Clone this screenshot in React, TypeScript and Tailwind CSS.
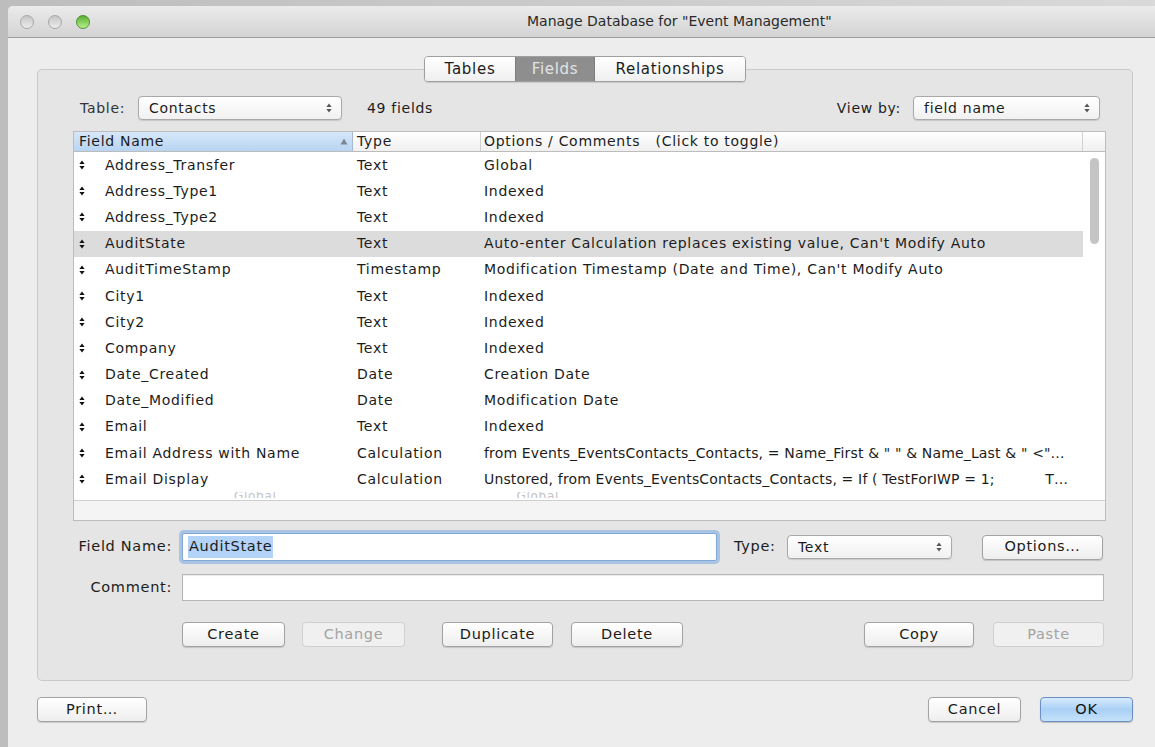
import React from "react"

type Field = { name: string; type: string; options: string; tight?: boolean }

const fields: Field[] = [
  { name: "Address_Transfer", type: "Text", options: "Global" },
  { name: "Address_Type1", type: "Text", options: "Indexed" },
  { name: "Address_Type2", type: "Text", options: "Indexed" },
  { name: "AuditState", type: "Text", options: "Auto-enter Calculation replaces existing value, Can't Modify Auto" },
  { name: "AuditTimeStamp", type: "Timestamp", options: "Modification Timestamp (Date and Time), Can't Modify Auto" },
  { name: "City1", type: "Text", options: "Indexed" },
  { name: "City2", type: "Text", options: "Indexed" },
  { name: "Company", type: "Text", options: "Indexed" },
  { name: "Date_Created", type: "Date", options: "Creation Date" },
  { name: "Date_Modified", type: "Date", options: "Modification Date" },
  { name: "Email", type: "Text", options: "Indexed" },
  {
    name: "Email Address with Name",
    type: "Calculation",
    options: "from Events_EventsContacts_Contacts, = Name_First & \" \" & Name_Last & \" <\"…",
    tight: true,
  },
  {
    name: "Email Display",
    type: "Calculation",
    options: "Unstored, from Events_EventsContacts_Contacts, = If ( TestForIWP = 1;           T…",
    tight: true,
  },
]

const SELECTED = "AuditState"

// little up/down arrows used as the drag handle and in popup menus
function UpDown({ className = "" }: { className?: string }) {
  return (
    <svg width="6" height="10" viewBox="0 0 6 10" className={className}>
      <path d="M3 0.5 L5.6 4 H0.4 Z" fill="currentColor" />
      <path d="M3 9.5 L5.6 6 H0.4 Z" fill="currentColor" />
    </svg>
  )
}

function PopUp({ value, width }: { value: string; width: string }) {
  return (
    <div
      className={`${width} h-[24px] shrink-0 flex items-center justify-between pl-[10px] pr-[9px] rounded-[4px] border border-[#a9a9a9] bg-gradient-to-b from-[#ffffff] to-[#f1f1f1] shadow-[0_1px_1px_rgba(0,0,0,0.12)] text-[14px] text-[#1c1c1c]`}
    >
      <span>{value}</span>
      <UpDown className="text-[#555]" />
    </div>
  )
}

function Button({
  label,
  width,
  disabled = false,
  primary = false,
}: {
  label: string
  width: string
  disabled?: boolean
  primary?: boolean
}) {
  let tone =
    "border-[#a3a3a3] bg-gradient-to-b from-[#ffffff] to-[#eeeeee] text-[#1b1b1b] shadow-[0_1px_1px_rgba(0,0,0,0.15)]"
  if (disabled) tone = "border-[#cfcfcf] bg-[#f0f0f0] text-[#a3a3a3]"
  if (primary)
    tone =
      "border-[#6b8fc4] bg-gradient-to-b from-[#d7ebfd] via-[#a9d0f5] to-[#c6e2fb] text-[#111] shadow-[0_1px_1px_rgba(0,0,0,0.2)]"
  return (
    <div
      className={`${width} h-[25px] shrink-0 flex items-center justify-center rounded-[4px] border text-[14.5px] ${tone}`}
    >
      {label}
    </div>
  )
}

export default function App() {
  return (
    <div
      className="w-[1155px] h-[747px] overflow-hidden flex bg-gradient-to-r from-[#bdbdbd] to-[#d9d9d9] text-[#1c1c1c] tracking-[0.7px]"
      style={{ fontFamily: '"DejaVu Sans", "Liberation Sans", sans-serif' }}
    >
      <div className="ml-[8px] mt-[6px] w-[1160px] shrink-0 flex flex-col bg-[#ededed] rounded-tl-[5px]">
        {/* title bar */}
        <div className="h-[32px] shrink-0 flex items-center rounded-tl-[5px] bg-gradient-to-b from-[#ebebeb] to-[#d3d3d3] border-b border-[#9c9c9c]">
          <div className="flex gap-[14px] pl-[12px]">
            <span className="w-[14px] h-[14px] rounded-full bg-gradient-to-b from-[#c5c5c5] to-[#ececec] border border-[#a7a7a7]" />
            <span className="w-[14px] h-[14px] rounded-full bg-gradient-to-b from-[#c5c5c5] to-[#ececec] border border-[#a7a7a7]" />
            <span className="w-[14px] h-[14px] rounded-full bg-gradient-to-b from-[#54b030] to-[#b9f08a] border border-[#4f8e34]" />
          </div>
          <div className="ml-[437px] text-[14px] tracking-normal text-[#2a2a2a]">Manage Database for "Event Management"</div>
        </div>

        {/* body */}
        <div className="flex flex-col pl-[29px] w-[1125px]">
          {/* group box */}
          <div className="mt-[31px] h-[612px] flex flex-col rounded-[5px] border border-[#c9c9c9] bg-[#e5e5e5]">
            {/* tabs */}
            <div className="-mt-[14px] flex justify-center">
              <div className="flex h-[26px] rounded-[4px] border border-[#9f9f9f] overflow-hidden shadow-[0_1px_1px_rgba(0,0,0,0.12)] text-[15px]">
                <div className="w-[90px] flex items-center justify-center bg-gradient-to-b from-[#ffffff] to-[#efefef]">Tables</div>
                <div className="w-[80px] flex items-center justify-center bg-[#8e8e8e] text-[#e3e3e3] border-x border-[#7d7d7d]">Fields</div>
                <div className="w-[150px] flex items-center justify-center bg-gradient-to-b from-[#ffffff] to-[#efefef]">Relationships</div>
              </div>
            </div>

            {/* table picker row */}
            <div className="mt-[14px] flex items-center pl-[42px] pr-[32px] text-[14px]">
              <span className="text-[#333] w-[58px]">Table:</span>
              <PopUp value="Contacts" width="w-[204px]" />
              <span className="ml-[25px]">49 fields</span>
              <span className="ml-auto mr-[12px]">View by:</span>
              <PopUp value="field name" width="w-[187px]" />
            </div>

            {/* field list */}
            <div className="mt-[11px] ml-[35px] w-[1033px] h-[390px] flex flex-col border border-[#bdbdbd] bg-white text-[14px]">
              <div className="h-[20px] shrink-0 flex border-b border-[#bcbcbc] bg-gradient-to-b from-[#ffffff] to-[#f0f0f0]">
                <div className="w-[279px] shrink-0 flex items-center justify-between pl-[5px] pr-[4px] bg-gradient-to-b from-[#d7e8f9] to-[#b7d4f1] border-r border-[#a9b9cb]">
                  <span>Field Name</span>
                  <svg width="8" height="7" viewBox="0 0 8 7">
                    <path d="M4 0.5 L7.5 6.5 H0.5 Z" fill="#7c8896" />
                  </svg>
                </div>
                <div className="w-[128px] shrink-0 flex items-center pl-[4px] border-r border-[#d0d0d0]">Type</div>
                <div className="w-[602px] shrink-0 flex items-center pl-[3px] border-r border-[#d0d0d0]">
                  Options / Comments&nbsp;&nbsp; (Click to toggle)
                </div>
              </div>
              <div className="flex-1 flex min-h-0">
                <div className="flex-1 min-w-0 flex flex-col overflow-hidden">
                  {fields.map((f) => (
                    <div
                      key={f.name}
                      className={`h-[26.2px] shrink-0 flex items-center ${f.name === SELECTED ? "bg-[#dcdcdc]" : ""}`}
                    >
                      <div className="w-[279px] shrink-0 flex items-center pl-[5px]">
                        <UpDown className="text-[#111]" />
                        <span className="ml-[20px]">{f.name}</span>
                      </div>
                      <div className="w-[128px] shrink-0 pl-[4px]">{f.type}</div>
                      <div
                        className={`flex-1 min-w-0 overflow-hidden pl-[3px] whitespace-pre ${f.tight ? "tracking-[0.15px]" : ""}`}
                      >
                        {f.options}
                      </div>
                    </div>
                  ))}
                  <div className="h-[6px] shrink-0 flex items-start overflow-hidden text-[#c4c4c4] text-[12px] leading-[8px]">
                    <span className="ml-[160px]">Global</span>
                    <span className="ml-[240px]">Global</span>
                  </div>
                </div>
                {/* scroll bar */}
                <div className="w-[22px] shrink-0 pt-[6px] flex justify-center">
                  <div className="w-[9px] h-[86px] rounded-full bg-[#c4c4c4]" />
                </div>
              </div>
              <div className="h-[20px] shrink-0 border-t border-[#cfcfcf] bg-[#f4f4f4]" />
            </div>

            {/* field name / type */}
            <div className="mt-[12px] flex items-center text-[14.5px]">
              <span className="w-[144px] shrink-0 text-right pr-[10px]">Field Name:</span>
              <div className="w-[535px] shrink-0 h-[28px] flex items-center pl-[5px] bg-white border border-[#7fa9d8] shadow-[0_0_0_3px_rgba(120,170,225,0.55)] rounded-[2px]">
                <span className="bg-[#b3d3f8] px-[1px]">AuditState</span>
              </div>
              <span className="ml-[17px] w-[53px] shrink-0">Type:</span>
              <PopUp value="Text" width="w-[165px]" />
              <div className="ml-[30px]">
                <Button label="Options…" width="w-[121px]" />
              </div>
            </div>

            {/* comment */}
            <div className="mt-[13px] flex items-center text-[14.5px]">
              <span className="w-[144px] shrink-0 text-right pr-[10px]">Comment:</span>
              <div className="w-[922px] h-[27px] bg-white border border-[#b5b5b5] shadow-[inset_0_1px_1px_rgba(0,0,0,0.08)]" />
            </div>

            {/* actions */}
            <div className="mt-[21px] flex items-center pl-[144px]">
              <Button label="Create" width="w-[103px]" />
              <div className="ml-[17px]">
                <Button label="Change" width="w-[103px]" disabled />
              </div>
              <div className="ml-[37px]">
                <Button label="Duplicate" width="w-[111px]" />
              </div>
              <div className="ml-[18px]">
                <Button label="Delete" width="w-[112px]" />
              </div>
              <div className="ml-[181px]">
                <Button label="Copy" width="w-[110px]" />
              </div>
              <div className="ml-[19px]">
                <Button label="Paste" width="w-[111px]" disabled />
              </div>
            </div>
          </div>

          {/* dialog buttons */}
          <div className="mt-[16px] flex items-center">
            <Button label="Print…" width="w-[110px]" />
            <div className="ml-auto flex gap-[19px]">
              <Button label="Cancel" width="w-[93px]" />
              <Button label="OK" width="w-[93px]" primary />
            </div>
          </div>
        </div>
      </div>
    </div>
  )
}
